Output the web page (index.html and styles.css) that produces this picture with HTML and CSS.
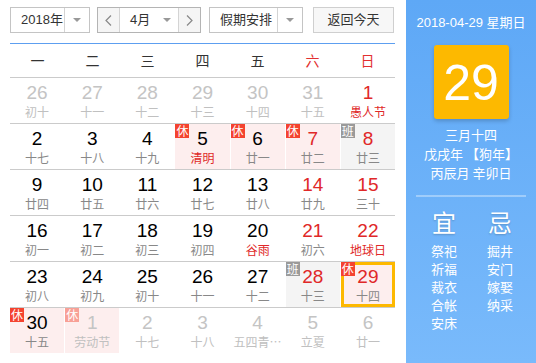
FILE: index.html
```html
<!DOCTYPE html>
<html lang="zh-CN">
<head>
    <meta charset="UTF-8">
    <title>万年历</title>
    <link rel="stylesheet" href="styles.css">
</head>
<body>
    <div class="calendar">
        <div class="main">
            <div class="toolbar">
                <div class="select year-select">
                    <span class="select-text">2018年</span>
                    <span class="select-arrow"><i class="caret"></i></span>
                </div>
                <div class="select month-select">
                    <span class="nav-btn">
                        <svg width="7" height="11" viewBox="0 0 7 11"><polyline points="6,0.5 1,5.5 6,10.5" fill="none" stroke="#888" stroke-width="1.2"/></svg>
                    </span>
                    <span class="month-field">
                        <span class="select-text">4月</span>
                        <i class="caret"></i>
                    </span>
                    <span class="nav-btn">
                        <svg width="7" height="11" viewBox="0 0 7 11"><polyline points="1,0.5 6,5.5 1,10.5" fill="none" stroke="#888" stroke-width="1.2"/></svg>
                    </span>
                </div>
                <div class="select holiday-select">
                    <span class="select-text">假期安排</span>
                    <span class="select-arrow"><i class="caret"></i></span>
                </div>
                <div class="today-btn">返回今天</div>
            </div>

            <div class="weekdays">
                <span>一</span><span>二</span><span>三</span><span>四</span><span>五</span>
                <span class="weekend">六</span><span class="weekend">日</span>
            </div>

            <div class="week">
                <div class="day other"><div class="num">26</div><div class="lunar">初十</div></div>
                <div class="day other"><div class="num">27</div><div class="lunar">十一</div></div>
                <div class="day other"><div class="num">28</div><div class="lunar">十二</div></div>
                <div class="day other"><div class="num">29</div><div class="lunar">十三</div></div>
                <div class="day other"><div class="num">30</div><div class="lunar">十四</div></div>
                <div class="day other"><div class="num">31</div><div class="lunar">十五</div></div>
                <div class="day weekend"><div class="num">1</div><div class="lunar festival">愚人节</div></div>
            </div>
            <div class="week">
                <div class="day"><div class="num">2</div><div class="lunar">十七</div></div>
                <div class="day"><div class="num">3</div><div class="lunar">十八</div></div>
                <div class="day"><div class="num">4</div><div class="lunar">十九</div></div>
                <div class="day rest"><span class="badge">休</span><div class="num">5</div><div class="lunar festival">清明</div></div>
                <div class="day rest"><span class="badge">休</span><div class="num">6</div><div class="lunar">廿一</div></div>
                <div class="day rest weekend"><span class="badge">休</span><div class="num">7</div><div class="lunar">廿二</div></div>
                <div class="day work weekend"><span class="badge">班</span><div class="num">8</div><div class="lunar">廿三</div></div>
            </div>
            <div class="week">
                <div class="day"><div class="num">9</div><div class="lunar">廿四</div></div>
                <div class="day"><div class="num">10</div><div class="lunar">廿五</div></div>
                <div class="day"><div class="num">11</div><div class="lunar">廿六</div></div>
                <div class="day"><div class="num">12</div><div class="lunar">廿七</div></div>
                <div class="day"><div class="num">13</div><div class="lunar">廿八</div></div>
                <div class="day weekend"><div class="num">14</div><div class="lunar">廿九</div></div>
                <div class="day weekend"><div class="num">15</div><div class="lunar">三十</div></div>
            </div>
            <div class="week">
                <div class="day"><div class="num">16</div><div class="lunar">初一</div></div>
                <div class="day"><div class="num">17</div><div class="lunar">初二</div></div>
                <div class="day"><div class="num">18</div><div class="lunar">初三</div></div>
                <div class="day"><div class="num">19</div><div class="lunar">初四</div></div>
                <div class="day"><div class="num">20</div><div class="lunar festival">谷雨</div></div>
                <div class="day weekend"><div class="num">21</div><div class="lunar">初六</div></div>
                <div class="day weekend"><div class="num">22</div><div class="lunar festival">地球日</div></div>
            </div>
            <div class="week">
                <div class="day"><div class="num">23</div><div class="lunar">初八</div></div>
                <div class="day"><div class="num">24</div><div class="lunar">初九</div></div>
                <div class="day"><div class="num">25</div><div class="lunar">初十</div></div>
                <div class="day"><div class="num">26</div><div class="lunar">十一</div></div>
                <div class="day"><div class="num">27</div><div class="lunar">十二</div></div>
                <div class="day work weekend"><span class="badge">班</span><div class="num">28</div><div class="lunar">十三</div></div>
                <div class="day rest weekend today"><span class="badge">休</span><div class="num">29</div><div class="lunar">十四</div></div>
            </div>
            <div class="week last">
                <div class="day rest"><span class="badge">休</span><div class="num">30</div><div class="lunar">十五</div></div>
                <div class="day rest other"><span class="badge">休</span><div class="num">1</div><div class="lunar">劳动节</div></div>
                <div class="day other"><div class="num">2</div><div class="lunar">十七</div></div>
                <div class="day other"><div class="num">3</div><div class="lunar">十八</div></div>
                <div class="day other"><div class="num">4</div><div class="lunar">五四青年节</div></div>
                <div class="day other"><div class="num">5</div><div class="lunar">立夏</div></div>
                <div class="day other"><div class="num">6</div><div class="lunar">廿一</div></div>
            </div>
        </div>

        <div class="side">
            <div class="side-date">2018-04-29 星期日</div>
            <div class="big-day">29</div>
            <div class="side-lunar">
                <div>三月十四</div>
                <div>戊戌年 【狗年】</div>
                <div>丙辰月 辛卯日</div>
            </div>
            <div class="side-line"></div>
            <div class="almanac">
                <div class="almanac-col">
                    <div class="almanac-title">宜</div>
                    <div>祭祀</div>
                    <div>祈福</div>
                    <div>裁衣</div>
                    <div>合帐</div>
                    <div>安床</div>
                </div>
                <div class="almanac-col">
                    <div class="almanac-title">忌</div>
                    <div>掘井</div>
                    <div>安门</div>
                    <div>嫁娶</div>
                    <div>纳采</div>
                </div>
            </div>
        </div>
    </div>
</body>
</html>
```

FILE: styles.css
```css
body {
    margin: 0;
    font-family: "Liberation Sans", "Noto Sans CJK SC", sans-serif;
    background: #fff;
}
.calendar {
    display: flex;
    height: 363px;
    overflow: hidden;
}
.main {
    width: 385px;
    margin-left: 10px;
    padding-top: 7px;
}

/* toolbar */
.toolbar {
    display: flex;
    height: 26px;
    margin-bottom: 10px;
    font-size: 13px;
    color: #333;
}
.select {
    display: flex;
    box-sizing: border-box;
    height: 26px;
    border: 1px solid #c4c4c4;
    background: #fff;
}
.select-text {
    line-height: 24px;
    padding-left: 10px;
    flex: 1;
}
.select-arrow {
    width: 24px;
    border-left: 1px solid #d4d4d4;
    display: flex;
    align-items: center;
    justify-content: center;
}
.caret {
    width: 0;
    height: 0;
    border-left: 4px solid transparent;
    border-right: 4px solid transparent;
    border-top: 4px solid #999;
}
.year-select {
    width: 80px;
}
.month-select {
    width: 104px;
    margin-left: 7px;
    border-color: #b4b4b4;
}
.nav-btn {
    width: 21px;
    background: #f5f5f5;
    display: flex;
    align-items: center;
    justify-content: center;
}
.month-field {
    width: 60px;
    display: flex;
    align-items: center;
    border-left: 1px solid #d4d4d4;
    border-right: 1px solid #d4d4d4;
    padding-right: 7px;
    box-sizing: border-box;
}
.holiday-select {
    width: 94px;
    margin-left: 8px;
}
.today-btn {
    box-sizing: border-box;
    width: 81px;
    height: 26px;
    margin-left: 10px;
    border: 1px solid #cfcfcf;
    background: #f7f7f7;
    text-align: center;
    line-height: 24px;
}

/* weekday header */
.weekdays {
    display: grid;
    grid-template-columns: repeat(7, minmax(0, 1fr));
    border-top: 1px solid #5d9ff0;
    border-bottom: 1px solid #cbcbcb;
    height: 33px;
    line-height: 33px;
    text-align: center;
    font-family: "Noto Sans CJK SC", sans-serif;
    font-size: 14px;
    color: #333;
}
.weekdays .weekend {
    color: #e23030;
}

/* days */
.week {
    display: grid;
    grid-template-columns: repeat(7, minmax(0, 1fr));
    column-gap: 1px;
    height: 45px;
    border-bottom: 1px solid #cbcbcb;
}
.week.last {
    border-bottom: none;
}
.day {
    position: relative;
    min-width: 0;
    text-align: center;
    padding-top: 5px;
}
.num {
    font-size: 19px;
    line-height: 20px;
    color: #000;
}
.lunar {
    font-family: "Noto Sans CJK SC", sans-serif;
    font-size: 12px;
    line-height: 16px;
    margin-top: 1px;
    color: #888;
    white-space: nowrap;
    overflow: hidden;
    text-overflow: ellipsis;
    padding: 0 3px;
}
.day.weekend .num,
.lunar.festival {
    color: #e02828;
}
.day.rest {
    background: #fdeeee;
}
.day.work {
    background: #f4f4f4;
}
.day.other .num {
    color: #c4c4c4;
}
.day.other .lunar {
    color: #c0c0c0;
}
.badge {
    position: absolute;
    top: 0;
    left: 0;
    z-index: 1;
    display: flex;
    align-items: center;
    justify-content: center;
    width: 14px;
    height: 14px;
    font-family: "Noto Sans CJK SC", sans-serif;
    font-size: 12px;
    line-height: 12px;
    color: #fff;
    background: #f4432f;
}
.day.work .badge {
    background: #9a9a9a;
}
.day.other .badge {
    background: #f8a096;
}
.day.today::after {
    content: "";
    position: absolute;
    inset: 0;
    border: 3px solid #fdb800;
}

/* side panel */
.side {
    width: 130px;
    margin-left: 11px;
    background: linear-gradient(#5ea8f6, #79bafb);
    color: #fff;
    text-align: center;
    font-family: "Noto Sans CJK SC", sans-serif;
    font-size: 13px;
}
.side-date {
    margin-top: 14px;
    line-height: 18px;
    font-family: "Liberation Sans", "Noto Sans CJK SC", sans-serif;
}
.big-day {
    width: 75px;
    height: 74px;
    margin: 13px auto 0;
    background: #fdb900;
    border-radius: 3px;
    box-shadow: 0 2px 4px rgba(0, 0, 0, 0.2);
    font-family: "Liberation Sans", sans-serif;
    font-size: 50px;
    line-height: 76px;
}
.side-lunar {
    margin-top: 6px;
    line-height: 19px;
}
.side-line {
    height: 2px;
    margin: 13px 10px 0;
    background: rgba(255, 255, 255, 0.35);
}
.almanac {
    display: flex;
    padding: 0 8px 0 10px;
    margin-top: 10px;
}
.almanac-col {
    width: 56px;
    line-height: 18px;
}
.almanac-title {
    font-size: 24px;
    line-height: 30px;
    margin-bottom: 5px;
    text-shadow: 0 1px 2px rgba(0, 0, 0, 0.2);
}
```
